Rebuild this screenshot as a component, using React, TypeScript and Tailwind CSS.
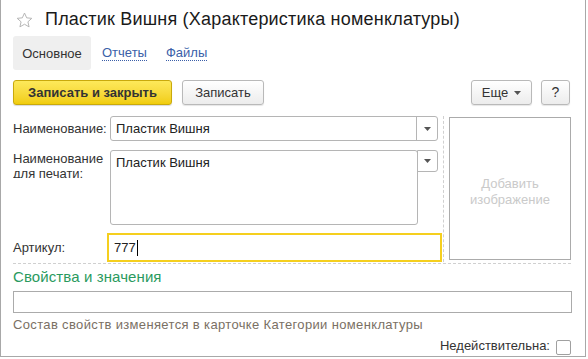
import React from "react";

function Caret() {
  return (
    <svg width="7" height="4" viewBox="0 0 7 4" className="block">
      <path d="M0 0h7L3.5 4z" fill="#555" />
    </svg>
  );
}

function Star() {
  return (
    <svg width="17" height="16" viewBox="0 0 24 23" className="block">
      <path
        d="M12 1.5l3.1 6.9 7.4.7-5.6 5 1.7 7.3L12 17.6l-6.6 3.8 1.7-7.3-5.6-5 7.4-.7z"
        fill="none"
        stroke="#b4b4b4"
        strokeWidth="1.4"
        strokeLinejoin="round"
      />
    </svg>
  );
}

export default function App() {
  return (
    <div className="w-[586px] h-[357px] bg-white border-l border-r border-b border-[#a8a8a8] overflow-hidden text-[13px] leading-[15px] text-[#333] font-['Liberation_Sans',Arial,sans-serif]">
      {/* Title */}
      <div className="flex items-start h-[36px] pt-[9px] pl-[15px]">
        <div className="mt-[3px]">
          <Star />
        </div>
        <div className="ml-[12px] text-[18px] leading-[21px] tracking-[0.2px] text-[#1a1a1a]">
          Пластик Вишня (Характеристика номенклатуры)
        </div>
      </div>

      {/* Tabs */}
      <div className="flex items-center h-[34px] pl-[12px]">
        <div className="w-[78px] h-[34px] flex items-center justify-center bg-[#efefef] rounded-[3px]">
          Основное
        </div>
        <span className="ml-[11px] text-[#3b5fa8] border-b border-dotted border-[#3b5fa8] leading-[15px]">
          Отчеты
        </span>
        <span className="ml-[19px] text-[#3b5fa8] border-b border-dotted border-[#3b5fa8] leading-[15px]">
          Файлы
        </span>
      </div>

      {/* Command bar */}
      <div className="flex items-center mt-[10px] pl-[12px] pr-[15px] h-[25px]">
        <button className="w-[159px] h-[25px] rounded-[3px] border border-[#c9a90c] bg-gradient-to-b from-[#fde95a] to-[#f1cd06] font-bold text-[#333] shadow-[0_1px_1px_rgba(0,0,0,0.15)]">
          Записать и закрыть
        </button>
        <button className="ml-[10px] w-[82px] h-[25px] rounded-[3px] border border-[#b9b9b9] bg-gradient-to-b from-white to-[#ececec] text-[#333] shadow-[0_1px_1px_rgba(0,0,0,0.1)]">
          Записать
        </button>
        <div className="flex-1" />
        <button className="w-[61px] h-[25px] rounded-[3px] border border-[#b9b9b9] bg-gradient-to-b from-white to-[#ececec] text-[#333] flex items-center justify-center gap-[6px] shadow-[0_1px_1px_rgba(0,0,0,0.1)]">
          <span>Еще</span>
          <Caret />
        </button>
        <button className="ml-[9px] w-[29px] h-[25px] rounded-[3px] border border-[#b9b9b9] bg-gradient-to-b from-white to-[#ececec] text-[#333] text-[14px] shadow-[0_1px_1px_rgba(0,0,0,0.1)]">
          ?
        </button>
      </div>

      {/* Form */}
      <div className="mt-[11px] mx-[12px] w-[558px] border-b border-dashed border-[#d0d0d0] pb-[1px] flex">
        <div className="w-[430px] flex flex-col">
          <div className="flex h-[25px] items-center">
            <div className="w-[97px]">Наименование:</div>
            <div className="w-[328px] h-[25px] flex border border-[#b5b5b5] rounded-[3px]">
              <div className="flex-1 pl-[5px] flex items-center text-[#222]">Пластик Вишня</div>
              <div className="w-[21px] border-l border-[#b5b5b5] flex items-center justify-center">
                <Caret />
              </div>
            </div>
          </div>
          <div className="flex mt-[9px] h-[75px]">
            <div className="w-[97px] h-[28px] overflow-hidden pt-[1px]">
              Наименование для печати:
            </div>
            <div className="w-[308px] h-[75px] border border-[#b5b5b5] rounded-[3px] pl-[5px] pt-[4px] text-[#222]">
              Пластик Вишня
            </div>
            <div className="w-[21px] h-[22px] -ml-[1px] border border-[#b5b5b5] rounded-r-[3px] flex items-center justify-center">
              <Caret />
            </div>
          </div>
          <div className="flex mt-[8px] h-[29px] items-center">
            <div className="w-[94px]">Артикул:</div>
            <div className="w-[335px] h-[29px] border-2 border-[#f5cf1e] pl-[5px] flex items-center text-[#222]">
              777
              <span className="inline-block w-[1px] h-[16px] bg-black ml-[1px]" />
            </div>
          </div>
        </div>
        <div className="w-[1px] h-[146px] border-l border-dashed border-[#d0d0d0]" />
        <div className="ml-[5px] w-[122px] h-[143px] mt-[1px] border border-[#ababab] flex items-center justify-center text-center text-[#cacaca] leading-[16px] pt-[6px]">
          Добавить
          <br />
          изображение
        </div>
      </div>

      {/* Properties */}
      <div className="mx-[12px] mt-[4px]">
        <div className="text-[15px] leading-[18px] tracking-[0.1px] text-[#2a9a5e]">Свойства и значения</div>
        <div className="mt-[5px] h-[22px] w-[559px] border border-[#ababab]" />
        <div className="mt-[4px] text-[#7a7064] tracking-[0.35px]">
          Состав свойств изменяется в карточке Категории номенклатуры
        </div>
        <div className="flex items-center justify-end mt-[5px] h-[20px] w-[558px]">
          <span className="-mt-[4px]">Недействительна:</span>
          <div className="ml-[6px] w-[15px] h-[15px] border border-[#a0a0a0] rounded-[2px] bg-white" />
        </div>
      </div>
    </div>
  );
}
